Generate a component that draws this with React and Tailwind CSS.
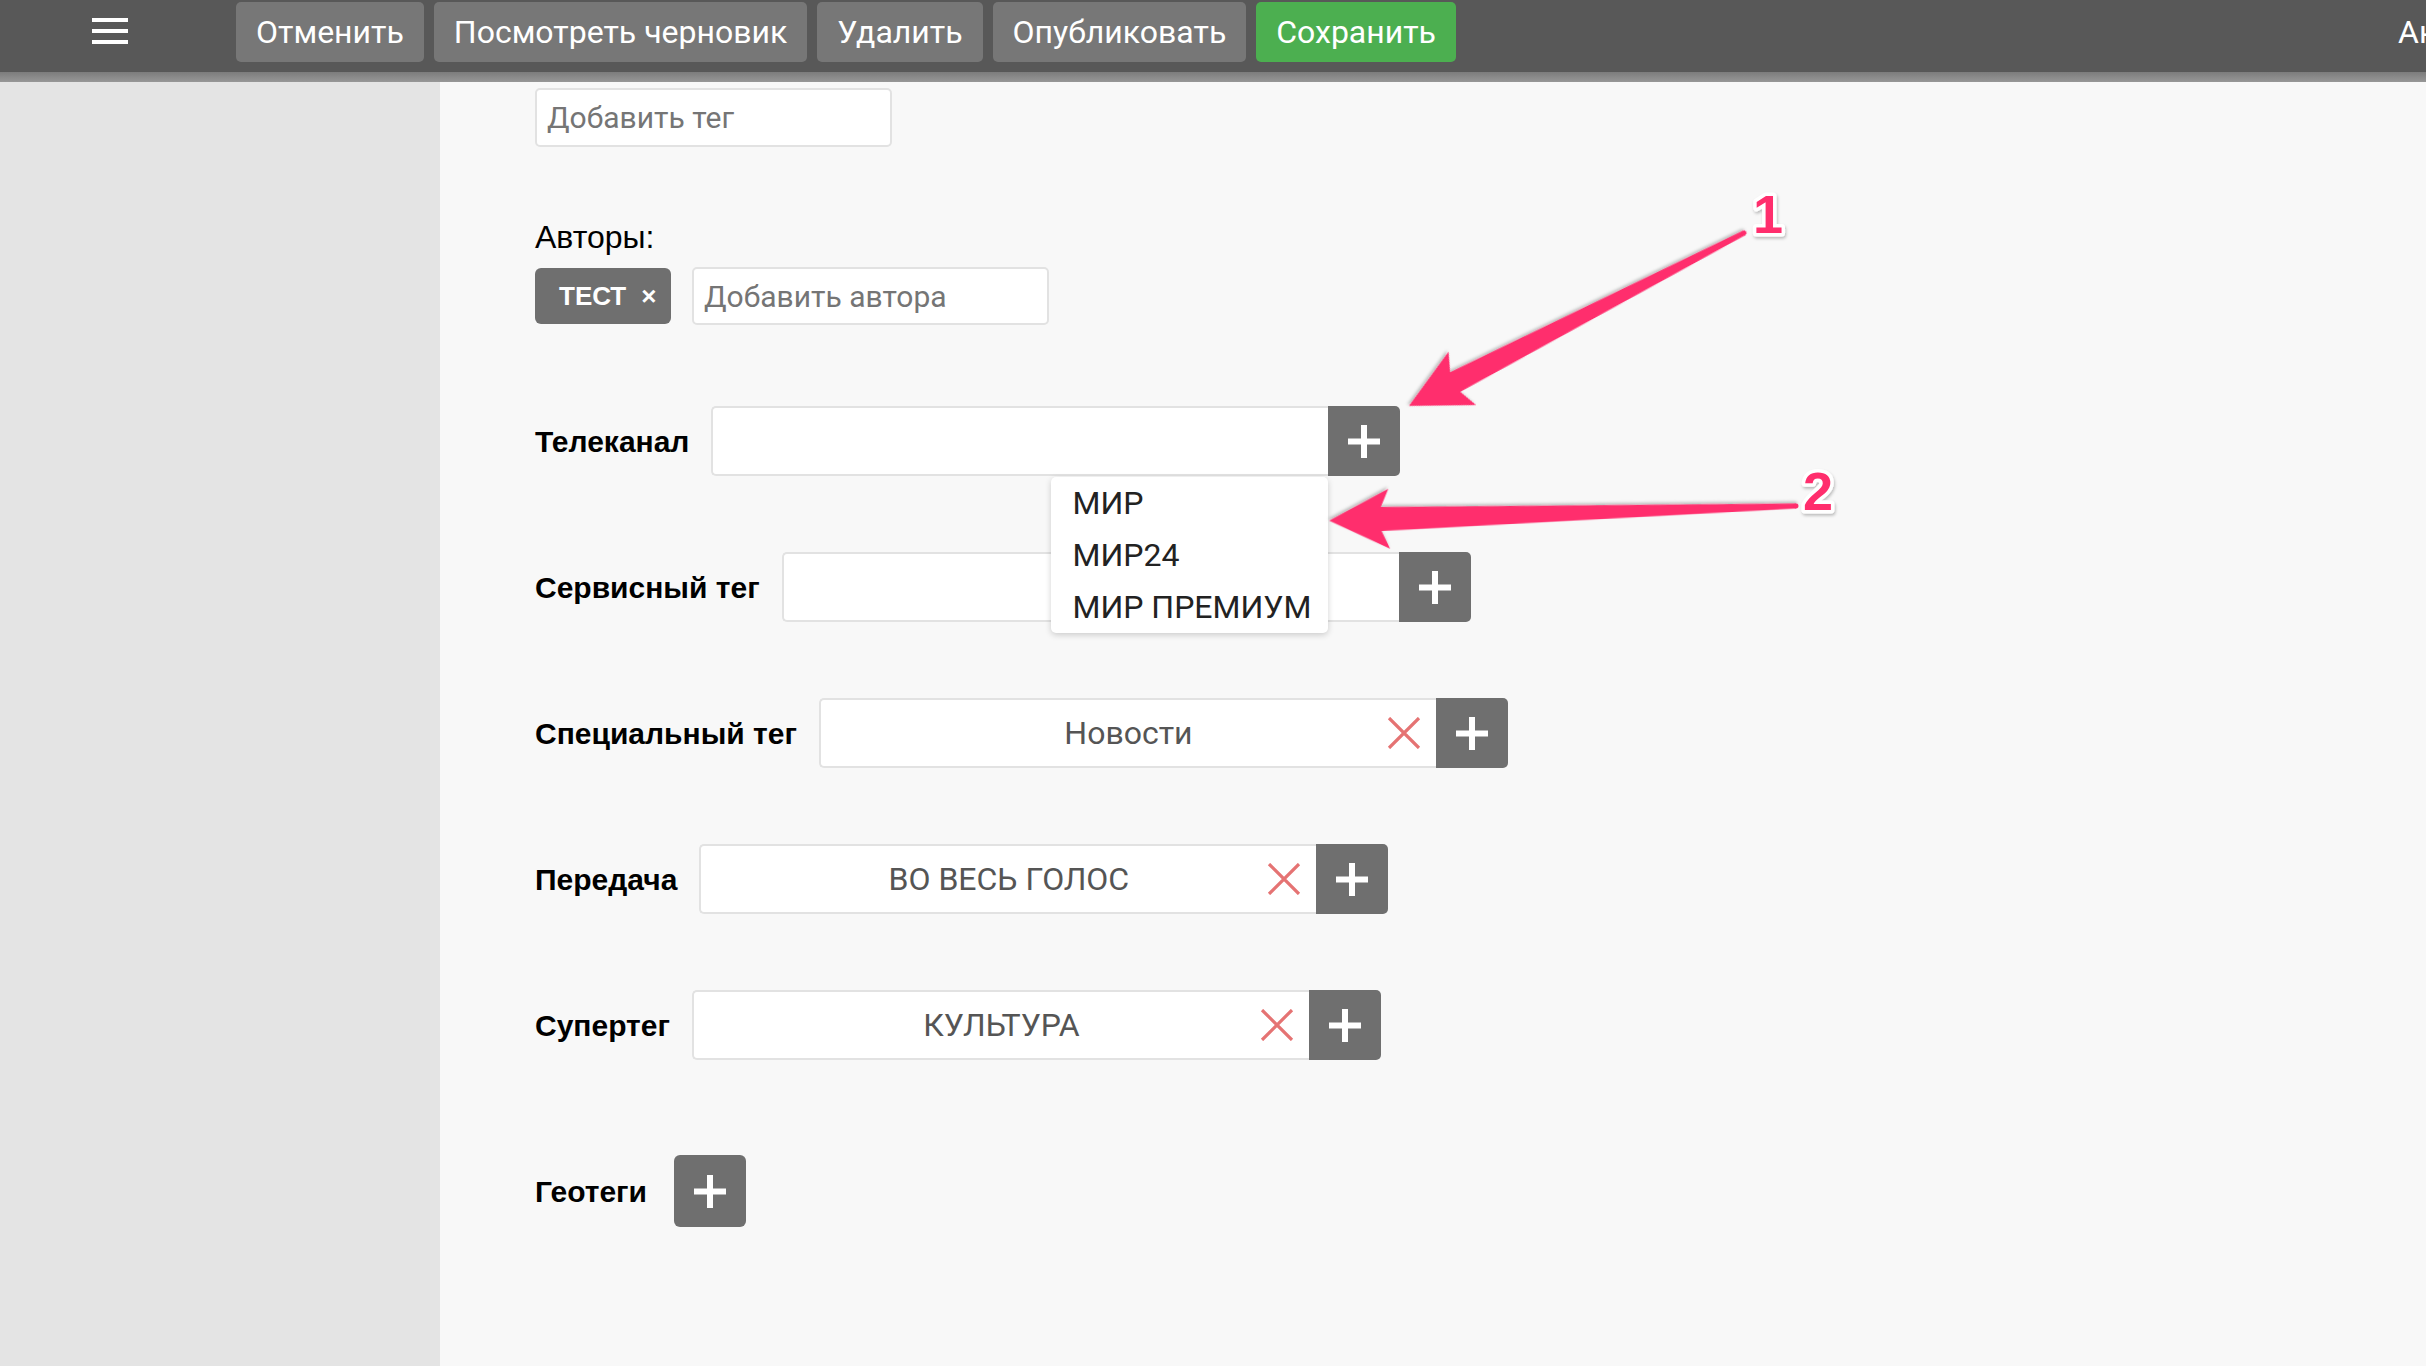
import React from 'react'

const sans = "font-['Liberation_Sans',Arial,sans-serif]"
const roboto = "font-['Roboto',sans-serif]"

function PlusIcon() {
  return (
    <svg width={32} height={33} viewBox="0 0 32 33">
      <rect x={13} y={0} width={6} height={33} fill="#fff" />
      <rect x={0} y={13.5} width={32} height={6} fill="#fff" />
    </svg>
  )
}

function ClearIcon() {
  return (
    <svg width={34} height={32} viewBox="0 0 34 32" className="absolute right-[15px]">
      <path d="M2 1 L32 31 M32 1 L2 31" stroke="#e57373" strokeWidth={3.2} fill="none" />
    </svg>
  )
}

function PlusButton({ rounded = 'rounded-r-[5px]' }) {
  return (
    <div className={`w-[72px] h-full bg-[#6f6f6f] flex items-center justify-center ${rounded}`}>
      <PlusIcon />
    </div>
  )
}

function TagField({ label, value, children }) {
  return (
    <div className="flex items-center gap-[22px]">
      <span className={`${sans} text-[30px] font-bold text-black`}>{label}</span>
      <div className="relative flex h-[70px]">
        <div className="relative w-[617px] h-full bg-white border-2 border-r-0 border-[#e2e2e2] rounded-l-[5px] flex items-center">
          {value && (
            <span className={`${roboto} flex-1 text-center text-[32px] text-[#555]`}>{value}</span>
          )}
          {value && <ClearIcon />}
        </div>
        <PlusButton />
        {children}
      </div>
    </div>
  )
}

function Dropdown() {
  const items = ['МИР', 'МИР24', 'МИР ПРЕМИУМ']
  return (
    <div className="absolute top-[71px] right-[72px] z-10 w-[277px] bg-white rounded-[5px] shadow-[0_2px_6px_rgba(0,0,0,0.18)]">
      {items.map((it) => (
        <div key={it} className={`${roboto} h-[52px] pl-[21px] flex items-center text-[32px] text-[#222]`}>
          {it}
        </div>
      ))}
    </div>
  )
}

function Arrow({ x, y, len, angle, half = 12 }) {
  const L = len
  const d = `M0,-2.5 L${L - 52},-${half} L${L - 60},-30 L${L},0 L${L - 60},30 L${L - 52},${half} L0,2.5 Z`
  return (
    <g transform={`translate(${x} ${y}) rotate(${angle})`} filter="url(#arrowShadow)">
      <path d={d} fill="#ff2d6d" />
      <circle cx={0} cy={0} r={2.5} fill="#ff2d6d" />
    </g>
  )
}

function Annotations() {
  return (
    <svg className="absolute left-0 top-0 pointer-events-none z-20" width={2426} height={1366}>
      <defs>
        <filter id="arrowShadow" x="-10%" y="-50%" width="120%" height="200%">
          <feDropShadow dx={1} dy={2} stdDeviation={1.5} floodColor="#000" floodOpacity={0.25} />
        </filter>
      </defs>
      <Arrow x={1744} y={233} len={377} angle={152.7} half={11} />
      <Arrow x={1796} y={506} len={467} angle={178.2} half={12} />
      <g filter="url(#arrowShadow)" fontFamily="Liberation Sans, Arial, sans-serif" fontWeight="bold" fontSize={54}>
        <text x={1768} y={233} textAnchor="middle" fill="#ff2d6d" stroke="#fff" strokeWidth={7} paintOrder="stroke" strokeLinejoin="round">1</text>
        <text x={1818} y={510} textAnchor="middle" fill="#ff2d6d" stroke="#fff" strokeWidth={7} paintOrder="stroke" strokeLinejoin="round">2</text>
      </g>
    </svg>
  )
}

export default function App() {
  const buttons = ['Отменить', 'Посмотреть черновик', 'Удалить', 'Опубликовать']
  return (
    <div className="relative w-full h-[1366px] overflow-hidden flex flex-col bg-[#f8f8f8]">
      {/* top bar */}
      <div className="h-[72px] bg-[#585858] flex items-start">
        <div className="w-[236px] pl-[92px] pt-[18px] flex flex-col gap-[7px]">
          <div className="w-[36px] h-[4px] bg-white" />
          <div className="w-[36px] h-[4px] bg-white" />
          <div className="w-[36px] h-[4px] bg-white" />
        </div>
        <div className="flex gap-[10px] pt-[2px]">
          {buttons.map((b) => (
            <div key={b} className={`${roboto} h-[60px] px-[20px] rounded-[5px] bg-[#777777] text-white text-[32px] flex items-center`}>
              {b}
            </div>
          ))}
          <div className={`${roboto} h-[60px] px-[20px] rounded-[5px] bg-[#4caf50] text-white text-[32px] flex items-center`}>
            Сохранить
          </div>
        </div>
        <div className={`${roboto} ml-auto w-[28px] h-[60px] mt-[2px] whitespace-nowrap text-white text-[32px] flex items-center`}>
          Аккаунт
        </div>
      </div>
      <div className="h-[10px] bg-gradient-to-b from-[#7c7c7c] to-[#979797] shadow-[0_2px_4px_rgba(0,0,0,0.06)]" />

      {/* body */}
      <div className="flex-1 flex">
        <div className="w-[440px] bg-[#e4e4e4]" />
        <div className="flex-1 bg-[#f8f8f8] pl-[95px] pt-[6px] flex flex-col items-start">
          <div className={`${roboto} w-[357px] h-[59px] bg-white border-2 border-[#e2e2e2] rounded-[5px] pl-[10px] flex items-center text-[30px] text-[#757575]`}>
            Добавить тег
          </div>

          <div className={`${sans} mt-[72px] text-[32px] leading-[36px] text-black`}>Авторы:</div>
          <div className="mt-[12px] flex items-center gap-[21px]">
            <div className={`${sans} h-[56px] w-[136px] rounded-[6px] bg-[#6f6f6f] pl-[24px] flex items-center gap-[15px] text-white font-bold text-[26px]`}>
              <span>ТЕСТ</span>
              <span className="text-[26px]">×</span>
            </div>
            <div className={`${roboto} w-[357px] h-[58px] bg-white border-2 border-[#e2e2e2] rounded-[5px] pl-[10px] flex items-center text-[30px] text-[#757575]`}>
              Добавить автора
            </div>
          </div>

          <div className="mt-[81px] flex flex-col gap-[76px]">
            <TagField label="Телеканал">
              <Dropdown />
            </TagField>
            <TagField label="Сервисный тег" />
            <TagField label="Специальный тег" value="Новости" />
            <TagField label="Передача" value="ВО ВЕСЬ ГОЛОС" />
            <TagField label="Супертег" value="КУЛЬТУРА" />
          </div>

          <div className="mt-[95px] flex items-center gap-[27px]">
            <span className={`${sans} text-[30px] font-bold text-black`}>Геотеги</span>
            <div className="h-[72px]">
              <PlusButton rounded="rounded-[6px]" />
            </div>
          </div>
        </div>
      </div>

      <Annotations />
    </div>
  )
}
